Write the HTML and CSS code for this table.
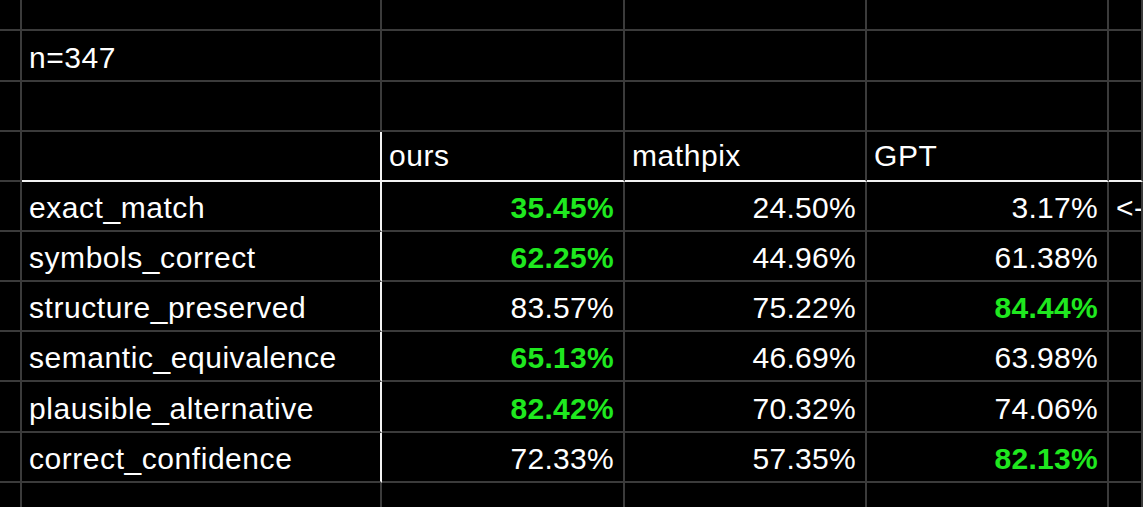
FILE: index.html
```html
<!DOCTYPE html>
<html>
<head>
<meta charset="utf-8">
<link rel="stylesheet" href="styles.css">
</head>
<body>
<div class="sheet">
  <div class="c"></div><div class="c"></div><div class="c"></div><div class="c"></div><div class="c"></div><div class="c"></div>

  <div class="c"></div><div class="c t">n=347</div><div class="c"></div><div class="c"></div><div class="c"></div><div class="c"></div>

  <div class="c"></div><div class="c"></div><div class="c"></div><div class="c"></div><div class="c"></div><div class="c"></div>

  <div class="c"></div><div class="c h lab"></div><div class="c h t hd">ours</div><div class="c h t hd">mathpix</div><div class="c h t hd">GPT</div><div class="c h"></div>

  <div class="c"></div><div class="c t lab">exact_match</div><div class="c n g">35.45%</div><div class="c n">24.50%</div><div class="c n">3.17%</div><div class="c t">&lt;-</div>

  <div class="c"></div><div class="c t lab">symbols_correct</div><div class="c n g">62.25%</div><div class="c n">44.96%</div><div class="c n">61.38%</div><div class="c"></div>

  <div class="c"></div><div class="c t lab">structure_preserved</div><div class="c n">83.57%</div><div class="c n">75.22%</div><div class="c n g">84.44%</div><div class="c"></div>

  <div class="c"></div><div class="c t lab">semantic_equivalence</div><div class="c n g">65.13%</div><div class="c n">46.69%</div><div class="c n">63.98%</div><div class="c"></div>

  <div class="c"></div><div class="c t lab">plausible_alternative</div><div class="c n g">82.42%</div><div class="c n">70.32%</div><div class="c n">74.06%</div><div class="c"></div>

  <div class="c"></div><div class="c t lab">correct_confidence</div><div class="c n">72.33%</div><div class="c n">57.35%</div><div class="c n g">82.13%</div><div class="c"></div>

  <div class="c end"></div><div class="c end"></div><div class="c end"></div><div class="c end"></div><div class="c end"></div><div class="c end"></div>
</div>
</body>
</html>
```
FILE: styles.css
```css
html, body {
  margin: 0;
  padding: 0;
  background: #000;
  overflow: hidden;
}
body {
  width: 1143px;
  height: 507px;
  overflow: hidden;
}
.sheet {
  display: grid;
  grid-template-columns: 22px 360px 243px 242px 242px 1fr;
  grid-template-rows: 31px 51px 50px 50px 50px 50px 50px 50px 51px 50px 1fr;
  height: 507px;
  font-family: "Liberation Sans", Arial, sans-serif;
  font-size: 30px;
  color: #fff;
  letter-spacing: 0.3px;
}
.c {
  box-sizing: border-box;
  border-right: 2px solid #3b3b3b;
  border-bottom: 2px solid #3b3b3b;
  display: flex;
  align-items: center;
  padding: 4px 9px 0 7px;
  white-space: nowrap;
  overflow: hidden;
}
.end {
  border-bottom: 0;
}
.t {
  justify-content: flex-start;
  letter-spacing: 0.55px;
}
.n {
  justify-content: flex-end;
  padding-right: 9px;
}
.g {
  color: #1fe81f;
  font-weight: bold;
}
.h {
  border-bottom-color: #f2f2f2;
}
.hd {
  padding-top: 0;
}
.lab {
  border-right-color: #f2f2f2;
}
```
